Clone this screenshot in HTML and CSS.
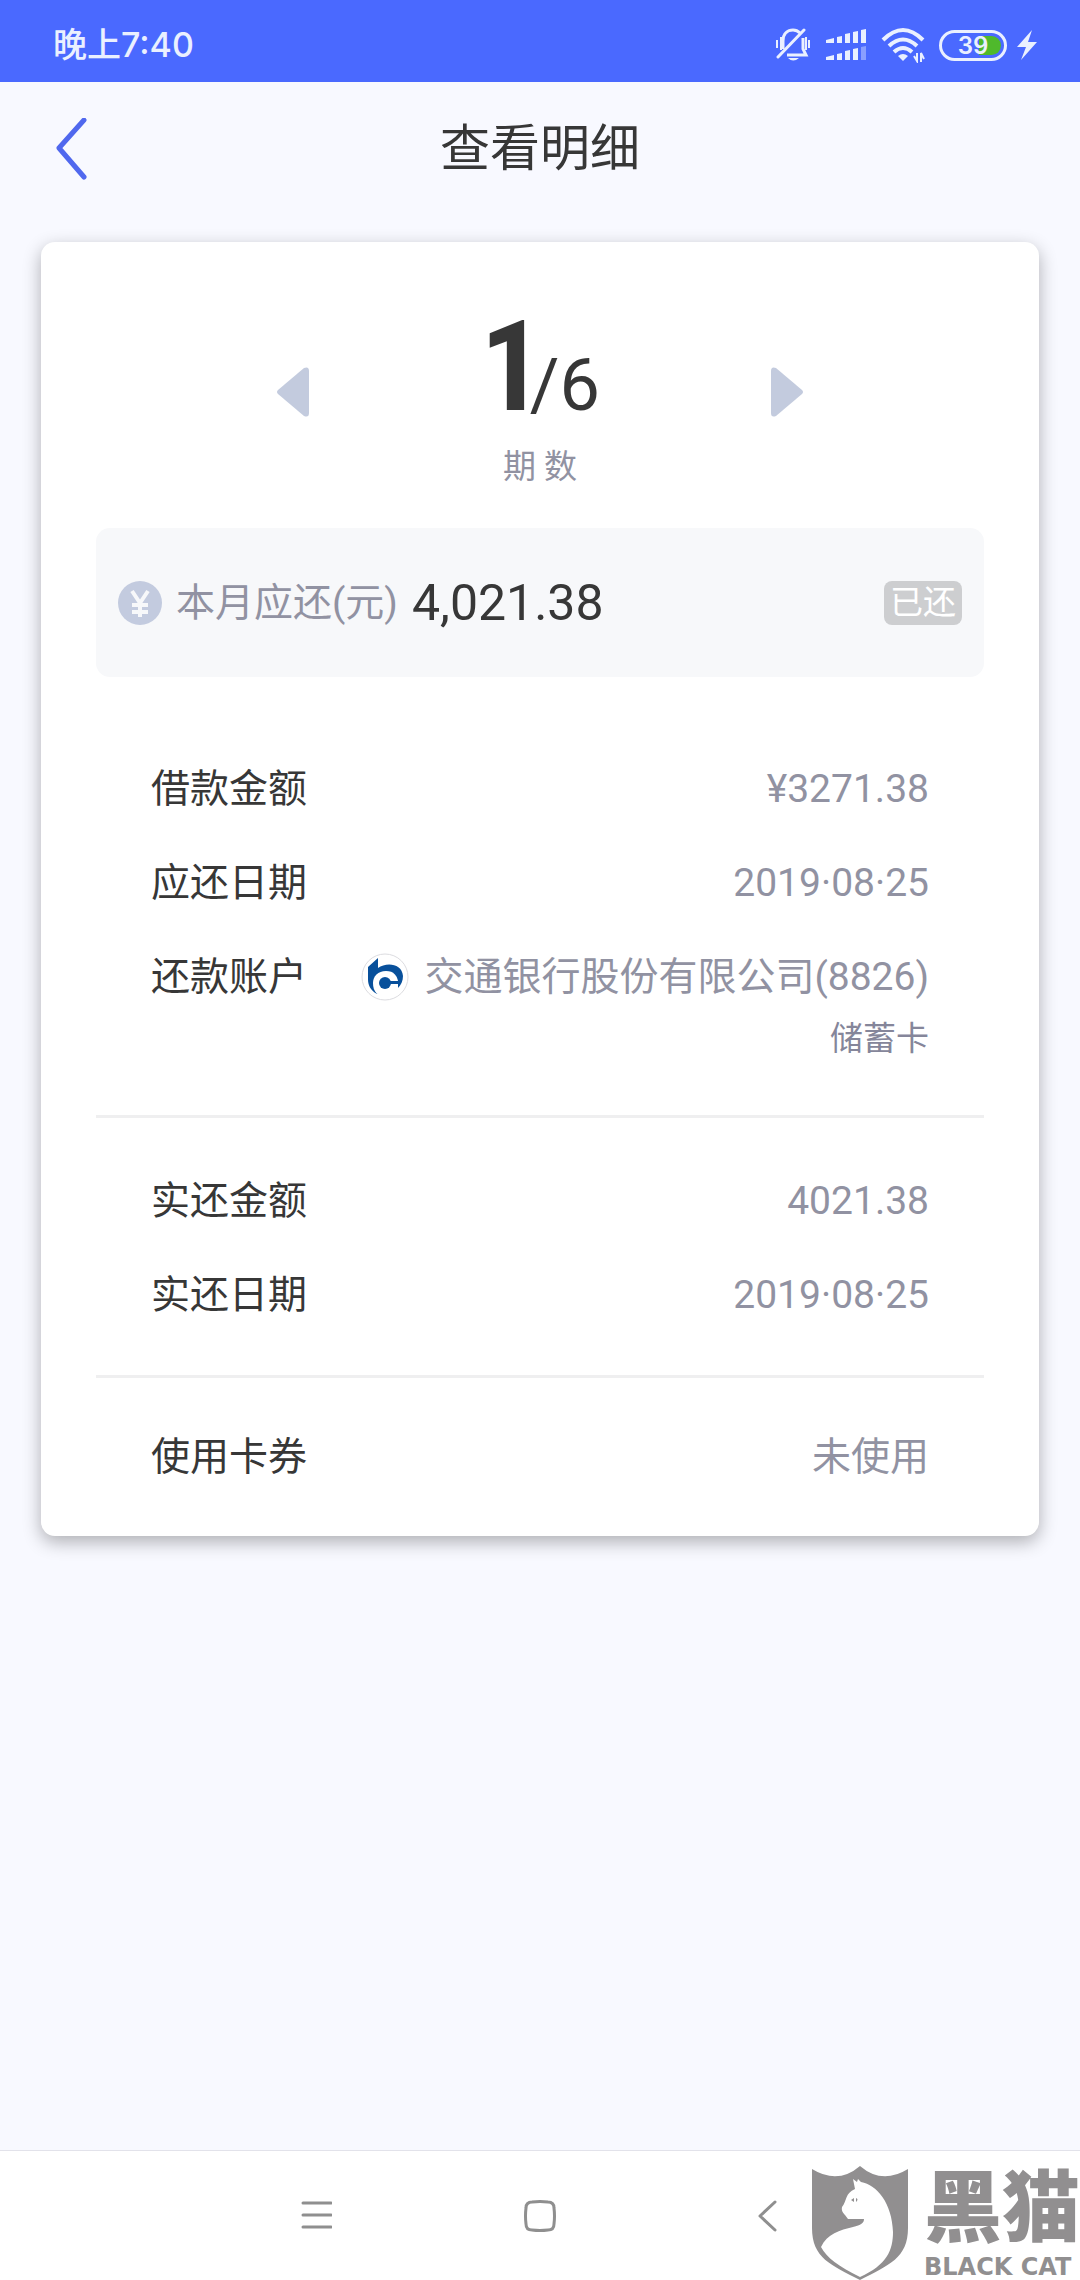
FILE: index.html
```html
<!DOCTYPE html>
<html lang="zh-CN">
<head>
    <meta charset="UTF-8">
    <meta name="viewport" content="width=device-width, initial-scale=1.0">
    <title>查看明细</title>
    <link rel="stylesheet" href="styles.css">
</head>
<body>
    <div class="status-bar">
        <span class="time">晚上7:40</span>
        <div class="status-icons">
            <svg class="icon-mute" width="36" height="34" viewBox="0 0 36 34" fill="none" stroke="#eaf0ff" stroke-width="3">
                <path d="M8 21V13C8 5 13 2 18 2C21 2 23 3 25 5M28 10V21L31 27H12"/>
                <path d="M3 29L29 2" stroke-linecap="round"/>
                <path d="M2 12V20M34 12V20M6 9V22M31 9V22" stroke-width="2"/>
                <path d="M13 30H24Q18 35 13 30Z" fill="#eaf0ff" stroke="none"/>
            </svg>
            <svg class="icon-signal" width="42" height="34" viewBox="0 0 42 34" fill="#eaf0ff">
                <path d="M1 12L9 10V15H1ZM12 9L17 8V15H12ZM20 6L25 5V15H20ZM28 4L33 3V15H28ZM36 2L41 1V15H36Z"/>
                <path d="M1 29L9 27V32H1ZM12 26L17 25V32H12ZM20 23L25 22V32H20ZM28 21L33 20V32H28Z"/>
                <path d="M36 19L41 18V32H36Z" opacity="0.4"/>
            </svg>
            <svg class="icon-wifi" width="44" height="36" viewBox="0 0 44 36" fill="none" stroke="#eaf0ff" stroke-width="4">
                <path d="M2 13Q22 -7 42 13M8 19Q22 6 36 19M13 25Q22 17 31 25"/>
                <path d="M17 29Q22 25 27 29L22 34Z" fill="#eaf0ff" stroke="none"/>
                <path d="M33 29L36 34V26M43 32L40 26V35" stroke-width="2"/>
            </svg>
            <span class="battery">39</span>
            <svg class="icon-bolt" width="20" height="30" viewBox="0 0 20 30" fill="#eaf0ff">
                <path d="M15 0L0 17H9L4 30L20 12H11Z"/>
            </svg>
        </div>
    </div>
    <header>
        <button class="back" type="button" aria-label="返回">
            <svg width="32" height="62" viewBox="0 0 32 62" fill="none" stroke="#5068ee" stroke-width="5" stroke-linecap="round" stroke-linejoin="round">
                <path d="M29 2L4 30L29 59"/>
            </svg>
        </button>
        <h1>查看明细</h1>
    </header>
    <main>
        <section class="card">
            <div class="period">
                <button class="arrow" type="button" aria-label="上一期">
                    <svg width="32" height="50" viewBox="0 0 32 50" fill="#c3cbde">
                        <path d="M1 23L27 1Q32 -1 32 4V46Q32 51 27 49L1 27Q-1 25 1 23Z"/>
                    </svg>
                </button>
                <div class="count">
                    <div class="number"><strong>1</strong><span>/6</span></div>
                    <div class="caption">期 数</div>
                </div>
                <button class="arrow" type="button" aria-label="下一期">
                    <svg width="32" height="50" viewBox="0 0 32 50" fill="#c3cbde">
                        <path d="M31 23L5 1Q0 -1 0 4V46Q0 51 5 49L31 27Q33 25 31 23Z"/>
                    </svg>
                </button>
            </div>
            <div class="due">
                <svg width="44" height="44" viewBox="0 0 44 44" fill="none" stroke="#f7f8fa" stroke-width="4">
                    <circle cx="22" cy="22" r="22" fill="#c3cbdf" stroke="none"/>
                    <path d="M14 10L22 22L30 10M22 21V36M14 24H30M14 31H30"/>
                </svg>
                <span class="due-label">本月应还(元)</span>
                <span class="due-amount">4,021.38</span>
                <span class="badge">已还</span>
            </div>
            <dl class="group">
                <div class="row"><dt>借款金额</dt><dd>¥3271.38</dd></div>
                <div class="row"><dt>应还日期</dt><dd>2019·08·25</dd></div>
                <div class="row">
                    <dt>还款账户</dt>
                    <dd class="bank">
                        <svg width="48" height="48" viewBox="0 0 48 48">
                            <circle cx="24" cy="24" r="23" fill="#fff" stroke="#dcdce0"/>
                            <path d="M7 14L17 5V15C25 9 41 10 42 23C42 28 40 32 37 35L30 30L16 41C9 37 7 32 7 26Z" fill="#08509b"/>
                            <path d="M25 18C33 18 36 23 37 28V37L16 41C13 38 12 34 12 30C12 23 17 18 25 18Z" fill="#fff"/>
                            <circle cx="24" cy="30" r="6" fill="#08509b"/>
                            <path d="M26 28H40L38 31H26Z" fill="#08509b"/>
                        </svg>
                        <span>交通银行股份有限公司(8826)</span>
                    </dd>
                </div>
                <div class="card-type">储蓄卡</div>
            </dl>
            <dl class="group">
                <div class="row"><dt>实还金额</dt><dd>4021.38</dd></div>
                <div class="row"><dt>实还日期</dt><dd>2019·08·25</dd></div>
            </dl>
            <dl class="group">
                <div class="row"><dt>使用卡券</dt><dd>未使用</dd></div>
            </dl>
        </section>
    </main>
    <nav>
        <button type="button" aria-label="菜单">
            <svg width="32" height="32" viewBox="0 0 32 32" fill="none" stroke="#8f8f8f" stroke-width="3" stroke-linecap="round">
                <path d="M3 3H31M3 15H31M3 27H31"/>
            </svg>
        </button>
        <button type="button" aria-label="主页">
            <svg width="32" height="32" viewBox="0 0 32 32" fill="none" stroke="#8f8f8f" stroke-width="3">
                <path d="M8 2Q16 1 24 2Q30 2 30 8Q31 16 30 24Q30 30 24 30Q16 31 8 30Q2 30 2 24Q1 16 2 8Q2 2 8 2Z"/>
            </svg>
        </button>
        <button type="button" aria-label="返回">
            <svg width="32" height="32" viewBox="0 0 32 32" fill="none" stroke="#8f8f8f" stroke-width="3" stroke-linecap="round" stroke-linejoin="round">
                <path d="M27 2L12 16L27 30"/>
            </svg>
        </button>
    </nav>
    <div class="watermark">
        <svg width="98" height="114" viewBox="0 0 98 114">
            <path d="M1 3Q27 19 49 0Q71 19 97 3V62C97 92 78 99 49 114C20 99 1 92 1 62Z" fill="#918f90"/>
            <path d="M42 13L46 16L47 13L50 16C66 19 81 37 82 66C82 84 76 99 49 111C27 100 16 92 10 81C16 68 29 64 42 61C50 59 53 57 53 53L37 53C33 47 30 46 31 41C36 35 34 27 44 23Z" fill="#fff"/>
            <path d="M40 34L43 32L43 36ZM45 32Q48 33 45 36Z" fill="#918f90"/>
        </svg>
        <div class="watermark-text">
            <span class="watermark-cn">黑猫</span>
            <span class="watermark-en">BLACK CAT</span>
        </div>
    </div>
</body>
</html>
```
FILE: styles.css
```css
* {
    box-sizing: border-box;
}
body {
    display: flex;
    flex-direction: column;
    min-height: 100vh;
    margin: 0;
    background-color: #f8f9ff;
    color: #373737;
    font-family: Roboto, "Noto Sans CJK SC", sans-serif;
    font-size: 39px;
}
button {
    display: flex;
    padding: 0;
    border: none;
    background: none;
    cursor: pointer;
}
svg {
    display: block;
    flex-shrink: 0;
}
.status-bar {
    display: flex;
    align-items: center;
    justify-content: space-between;
    height: 82px;
    padding: 8px 43px 0 53px;
    background-color: #4a69ff;
    color: #eaf0ff;
}
.time {
    font-family: Inter, "Noto Sans CJK SC", sans-serif;
    font-size: 34px;
    font-weight: 500;
    line-height: 40px;
}
.status-icons {
    display: flex;
    align-items: center;
    gap: 14px;
}
.icon-bolt {
    margin-left: -4px;
}
.battery {
    width: 68px;
    height: 31px;
    border: 3px solid #eaf0ff;
    border-radius: 16px;
    background: linear-gradient(to right, #4a69ff 60%, #4fb92c 60%) content-box;
    padding: 3px;
    font-family: Inter, sans-serif;
    font-size: 24px;
    font-weight: 600;
    line-height: 19px;
    text-align: center;
}
header {
    display: flex;
    align-items: center;
    height: 132px;
    padding: 2px 55px 0;
}
.back {
    width: 60px;
}
h1 {
    flex: 1;
    margin: 0 60px 0 0;
    font-size: 50px;
    font-weight: 400;
    line-height: 60px;
    text-align: center;
}
main {
    flex: 1;
    padding: 28px 41px;
}
.card {
    padding: 55px 55px 32px;
    border-radius: 14px;
    background-color: #fff;
    box-shadow: 0 6px 18px rgba(0, 0, 0, 0.3);
}
.period {
    display: flex;
    justify-content: center;
    height: 231px;
}
.arrow {
    margin-top: 70px;
    height: 50px;
}
.count {
    width: 462px;
    text-align: center;
}
.number {
    height: 140px;
    line-height: 140px;
    white-space: nowrap;
}
.number strong {
    margin-right: -14px;
    font-family: "Roboto Condensed", "Open Sans Condensed", "Noto Sans Condensed", Roboto, sans-serif;
    font-size: 126px;
    font-weight: 700;
}
.number span {
    font-size: 72px;
}
.caption {
    color: #9192a2;
    font-size: 33px;
    line-height: 60px;
}
.due {
    display: flex;
    align-items: center;
    height: 149px;
    padding: 0 22px;
    border-radius: 14px;
    background-color: #f7f8fa;
    line-height: 60px;
}
.due-label {
    margin-left: 14px;
    color: #9192a2;
}
.due-amount {
    margin-left: 14px;
    font-size: 50px;
}
.badge {
    margin-left: auto;
    padding: 0 6px;
    border-radius: 8px;
    background-color: #cdced0;
    color: #fff;
    font-size: 33px;
    line-height: 44px;
}
.group {
    margin: 0;
    padding: 36px 55px 33px;
    border-bottom: 3px solid #efeff0;
}
.due + .group {
    padding-top: 65px;
}
.group:last-child {
    padding: 32px 55px 0;
    border-bottom: none;
}
.row {
    display: flex;
    justify-content: space-between;
    line-height: 94px;
}
dd {
    margin: 0;
    color: #9192a2;
}
.bank {
    display: flex;
    align-items: center;
    gap: 15px;
}
.card-type {
    margin-bottom: 28px;
    color: #85869a;
    font-size: 33px;
    line-height: 30px;
    text-align: right;
}
nav {
    display: flex;
    justify-content: center;
    align-items: center;
    gap: 192px;
    height: 130px;
    border-top: 1px solid #e2e2ea;
    background-color: #fff;
}
.watermark {
    position: absolute;
    right: 0;
    bottom: 0;
    display: flex;
    gap: 15px;
    color: #918f90;
}
.watermark-text {
    display: flex;
    flex-direction: column;
}
.watermark-cn {
    font-size: 78px;
    font-weight: 900;
    line-height: 88px;
}
.watermark-en {
    font-family: "DejaVu Sans", sans-serif;
    font-size: 24px;
    font-weight: 700;
    line-height: 26px;
}
```
